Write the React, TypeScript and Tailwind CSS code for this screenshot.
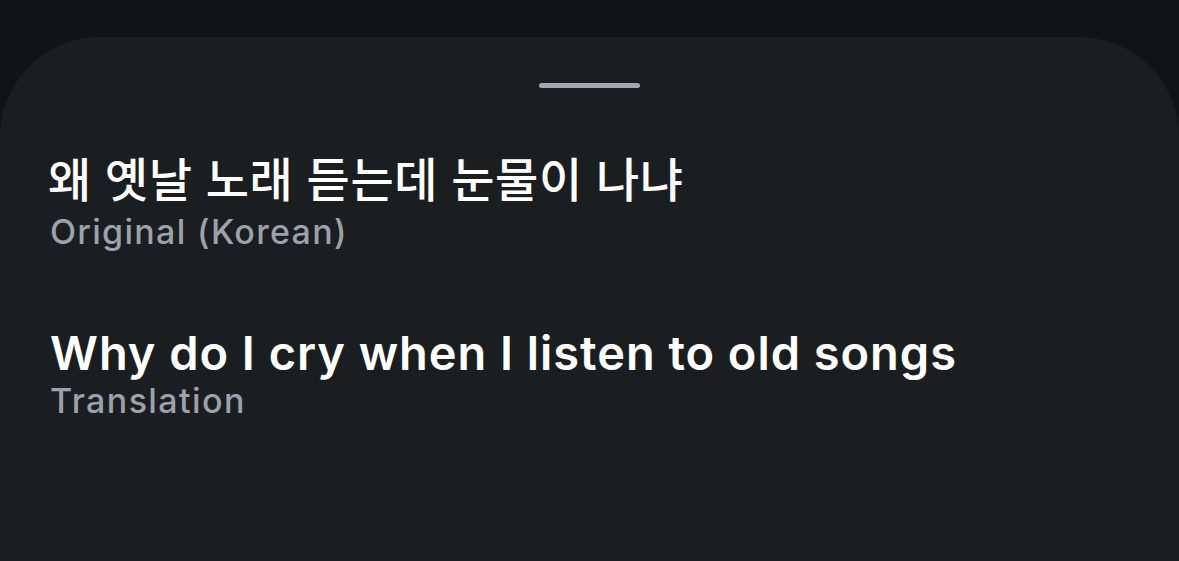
export default function App() {
  return (
    <div className="h-[561px] w-full overflow-hidden bg-[#111417] pt-[37px]" style={{ fontFamily: 'Inter, "Noto Sans CJK KR", sans-serif' }}>
      <div className="h-full rounded-t-[100px] bg-[#1b1e21]">
        {/* drag handle */}
        <div className="flex justify-center pt-[46px]">
          <div className="h-[5px] w-[101px] rounded-full bg-[#a3a8b0]" />
        </div>

        <div className="px-[48px] pt-[64px]">
          <div className="flex flex-col">
            <p className="text-[47px] font-medium leading-[56px] tracking-[0.6px] text-white">
              왜 옛날 노래 듣는데 눈물이 나냐
            </p>
            <p className="mt-[5px] ml-[2px] text-[34px] font-medium leading-[38px] tracking-[1.3px] text-[#9ca1ab]">
              Original (Korean)
            </p>
          </div>

          <div className="mt-[76px] flex flex-col">
            <p className="ml-[2px] text-[47px] font-semibold leading-[52px] tracking-[0.95px] text-white">
              Why do I cry when I listen to old songs
            </p>
            <p className="mt-[3px] ml-[2px] text-[34px] font-medium leading-[38px] tracking-[1.4px] text-[#9ca1ab]">
              Translation
            </p>
          </div>
        </div>
      </div>
    </div>
  );
}
